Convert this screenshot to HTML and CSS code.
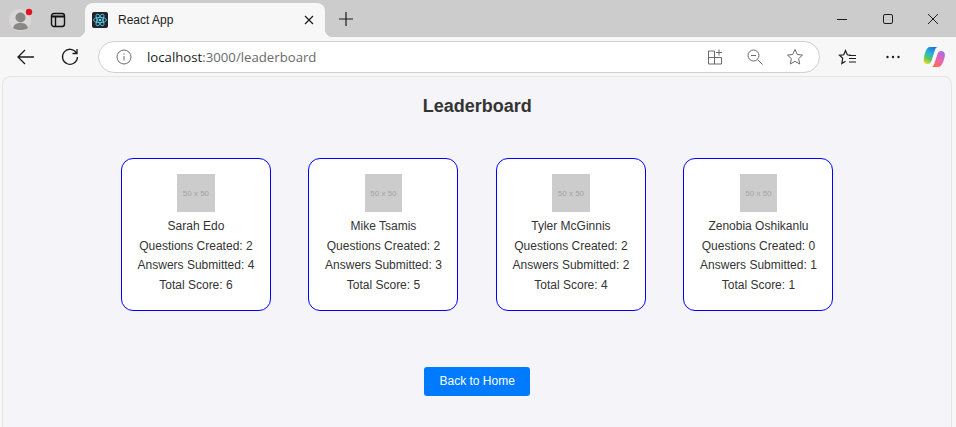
FILE: index.html
```html
<!DOCTYPE html>
<html lang="en">
<head>
  <meta charset="UTF-8" />
  <title>React App</title>
  <link rel="stylesheet" href="styles.css">
</head>
<body>
  <div class="tabbar">
    <div class="profile">
      <svg width="24" height="24" viewBox="0 0 24 24">
        <circle cx="11" cy="12" r="11" fill="#d9d8d6"/>
        <circle cx="11.500" cy="9.500" r="5" fill="#8a8886"/>
        <path d="M4 20c1-4 4-5 7.500-5s6.500 1 7.500 5c-2 1.500-4.500 2-7.500 2s-5.500-.5-7.500-2z" fill="#8a8886"/>
        <circle cx="20" cy="4" r="3.200" fill="#e81123"/>
      </svg>
    </div>
    <div class="tabs-btn">
      <svg width="16" height="16" viewBox="0 0 16 16" fill="none" stroke="#111" stroke-width="1.400">
        <rect x="1.500" y="1.500" width="13" height="13" rx="2.500"/>
        <path d="M1.500 4.500h13" stroke-width="2"/>
        <path d="M5.500 4.500v10"/>
      </svg>
    </div>
    <div class="tab">
      <svg class="favicon" width="16" height="16" viewBox="0 0 16 16" fill="none" stroke="#61dafb" stroke-width="0.800">
        <rect width="16" height="16" rx="2" fill="#20232a" stroke="none"/>
        <ellipse cx="8" cy="8" rx="6.500" ry="2.600"/>
        <ellipse cx="8" cy="8" rx="6.500" ry="2.600" transform="rotate(60 8 8)"/>
        <ellipse cx="8" cy="8" rx="6.500" ry="2.600" transform="rotate(120 8 8)"/>
        <circle cx="8" cy="8" r="1.300" fill="#61dafb" stroke="none"/>
      </svg>
      <span class="tab-title">React App</span>
      <svg width="10" height="10" viewBox="0 0 10 10" stroke="#1c1c1c" stroke-width="1.200">
        <path d="M1 1l8 8M9 1l-8 8"/>
      </svg>
    </div>
    <div class="new-tab">
      <svg width="16" height="16" viewBox="0 0 16 16" stroke="#1c1c1c" stroke-width="1.200">
        <path d="M8 1v14M1 8h14"/>
      </svg>
    </div>
    <div class="window-btns">
      <svg width="12" height="12" viewBox="0 0 12 12" stroke="#1c1c1c" stroke-width="1">
        <path d="M1 6.500h10"/>
      </svg>
      <svg width="12" height="12" viewBox="0 0 12 12" fill="none" stroke="#1c1c1c" stroke-width="1">
        <rect x="1.500" y="1.500" width="9" height="9" rx="1.500"/>
      </svg>
      <svg width="12" height="12" viewBox="0 0 12 12" stroke="#1c1c1c" stroke-width="1">
        <path d="M1 1l10 10M11 1l-10 10"/>
      </svg>
    </div>
  </div>

  <div class="toolbar">
    <svg class="nav-icon" width="20" height="20" viewBox="0 0 20 20" fill="none" stroke="#1c1c1c" stroke-width="1.300">
      <path d="M18 10H2M9 3l-7 7 7 7"/>
    </svg>
    <svg class="nav-icon" width="20" height="20" viewBox="0 0 20 20" fill="none" stroke="#1c1c1c" stroke-width="1.300">
      <path d="M16.500 6A7.500 7.500 0 1 0 17.500 10M17 2v4.500h-4.500"/>
    </svg>
    <div class="address">
      <svg width="16" height="16" viewBox="0 0 16 16" fill="none" stroke="#6a6a6a" stroke-width="1">
        <circle cx="8" cy="8" r="7"/>
        <path d="M8 7v4.500M8 4.500v1.200"/>
      </svg>
      <div class="url"><span class="host">localhost</span>:3000/leaderboard</div>
      <div class="address-icons">
        <svg width="18" height="18" viewBox="0 0 18 18" fill="none" stroke="#6a6a6a" stroke-width="1">
          <path d="M8.500 3H2.500v13h13V9.500H2.500M8.500 3v13"/>
          <path d="M13 1.500v6M10 4.500h6"/>
        </svg>
        <svg width="18" height="18" viewBox="0 0 18 18" fill="none" stroke="#6a6a6a" stroke-width="1">
          <circle cx="7.500" cy="7.500" r="5.500"/>
          <path d="M5 7.500h5M11.500 11.500l5 5"/>
        </svg>
        <svg width="18" height="18" viewBox="0 0 18 18" fill="none" stroke="#6a6a6a" stroke-width="1">
          <path d="M9 1.500l2.300 5 5.200.6-3.900 3.600 1.100 5.300L9 13.300 4.300 16l1.100-5.300L1.500 7.100l5.200-.6z"/>
        </svg>
      </div>
    </div>
    <div class="toolbar-right">
      <svg class="favorites" width="18" height="18" viewBox="0 0 18 18" fill="none" stroke="#1c1c1c" stroke-width="1.200">
        <path d="M13 7.300L9.300 6.800 7.500 2.500 5.700 6.800l-4.200.5 3.200 3-.9 5.200 3.700-2.300"/>
        <path d="M11 7.500h7M11 10.500h7M11 14h7"/>
      </svg>
      <svg width="18" height="18" viewBox="0 0 18 18" fill="#1c1c1c">
        <circle cx="3.500" cy="9" r="1.200"/>
        <circle cx="9" cy="9" r="1.200"/>
        <circle cx="14.500" cy="9" r="1.200"/>
      </svg>
      <svg width="22" height="22" viewBox="0 0 22 22">
        <defs>
          <linearGradient id="copilotA" x1="0.700" y1="0" x2="0.200" y2="1">
            <stop offset="0" stop-color="#1d6fe0"/>
            <stop offset="0.400" stop-color="#27b5d8"/>
            <stop offset="0.700" stop-color="#52c95c"/>
            <stop offset="1" stop-color="#f2d531"/>
          </linearGradient>
          <linearGradient id="copilotB" x1="0.800" y1="0" x2="0.200" y2="1">
            <stop offset="0" stop-color="#a56be8"/>
            <stop offset="0.550" stop-color="#f064a6"/>
            <stop offset="1" stop-color="#f5703a"/>
          </linearGradient>
        </defs>
        <path d="M7 1h8c-1.500 0-2.500 1-3 2.500L8.500 15c-.6 2-2 3-4 3-2.700 0-4.200-2-3.700-5C1.500 8 3 1 7 1z" fill="url(#copilotA)"/>
        <path d="M15 21H8c1.500 0 2.500-1 3-2.500L14.500 8c.6-2 2-3 3.500-3 2.700 0 4.300 2 3.800 5C21 14.500 19 21 15 21z" fill="url(#copilotB)"/>
      </svg>
    </div>
  </div>

  <div class="page">
    <h1>Leaderboard</h1>
    <div class="cards">
      <div class="card">
        <div class="avatar">50 x 50</div>
        <p>Sarah Edo</p>
        <p>Questions Created: 2</p>
        <p>Answers Submitted: 4</p>
        <p>Total Score: 6</p>
      </div>
      <div class="card">
        <div class="avatar">50 x 50</div>
        <p>Mike Tsamis</p>
        <p>Questions Created: 2</p>
        <p>Answers Submitted: 3</p>
        <p>Total Score: 5</p>
      </div>
      <div class="card">
        <div class="avatar">50 x 50</div>
        <p>Tyler McGinnis</p>
        <p>Questions Created: 2</p>
        <p>Answers Submitted: 2</p>
        <p>Total Score: 4</p>
      </div>
      <div class="card">
        <div class="avatar">50 x 50</div>
        <p>Zenobia Oshikanlu</p>
        <p>Questions Created: 0</p>
        <p>Answers Submitted: 1</p>
        <p>Total Score: 1</p>
      </div>
    </div>
    <button class="home-btn" type="button">Back to Home</button>
  </div>
</body>
</html>
```

FILE: styles.css
```css
html, body {
  height: 100%;
}
body {
  margin: 0;
  background-color: #f7f7f7;
  font-family: "Liberation Sans", Arial, sans-serif;
  color: #333;
  display: flex;
  flex-direction: column;
  overflow: hidden;
}
.tabbar {
  height: 37px;
  background-color: #cccccc;
  display: flex;
  align-items: center;
  flex-shrink: 0;
}
.profile {
  margin-left: 9px;
  margin-top: 3px;
  width: 24px;
  height: 24px;
}
.tabs-btn {
  margin-left: 17px;
  margin-top: 3px;
  width: 16px;
  height: 16px;
}
.tab {
  position: relative;
  margin-left: 19px;
  margin-top: 3px;
  height: 34px;
  width: 240px;
  box-sizing: border-box;
  padding: 0 11px 0 7px;
  background-color: #f7f7f7;
  border-radius: 8px 8px 0 0;
  display: flex;
  align-items: center;
  font-size: 12px;
  color: #1c1c1c;
}
.tab::before,
.tab::after {
  content: "";
  position: absolute;
  bottom: 0;
  width: 8px;
  height: 8px;
}
.tab::before {
  left: -8px;
  background: radial-gradient(circle at 0 0, #cccccc 8px, #f7f7f7 8.500px);
}
.tab::after {
  right: -8px;
  background: radial-gradient(circle at 100% 0, #cccccc 8px, #f7f7f7 8.500px);
}
.tab-title {
  flex: 1;
  margin-left: 10px;
}
.new-tab {
  margin-left: 13px;
  width: 16px;
  height: 16px;
}
.window-btns {
  margin-left: auto;
  margin-right: 17px;
  display: flex;
  gap: 33.500px;
}
.toolbar {
  height: 38px;
  padding-top: 1px;
  display: flex;
  align-items: center;
  flex-shrink: 0;
}
.nav-icon {
  margin-left: 16px;
  margin-right: 8px;
}
.address {
  margin-left: 10px;
  width: 722px;
  height: 32px;
  box-sizing: border-box;
  padding: 0 15px 0 17px;
  background-color: #fff;
  border: 1px solid #d0d0d0;
  border-radius: 16px;
  display: flex;
  align-items: center;
}
.url {
  margin-left: 15px;
  font-family: "Open Sans", sans-serif;
  font-size: 13.200px;
  color: #6a6a6a;
}
.host {
  color: #1c1c1c;
}
.address-icons {
  margin-left: auto;
  display: flex;
  gap: 22px;
}
.toolbar-right {
  margin-left: 18px;
  display: flex;
  align-items: center;
  gap: 21px;
}
.favorites {
  margin-right: 7px;
}
.page {
  flex: 1;
  margin: 0 3.600px 0 2px;
  background-color: #f4f4f9;
  border: 1px solid #e6e6e6;
  border-bottom: none;
  border-radius: 8px 8px 0 0;
  display: flex;
  flex-direction: column;
  align-items: center;
}
h1 {
  margin: 18px 0 0;
  font-size: 18px;
  line-height: 22px;
  color: #333;
}
.cards {
  margin-top: 41px;
  display: flex;
  gap: 37.500px;
}
.card {
  width: 150px;
  height: 153px;
  box-sizing: border-box;
  padding-top: 15px;
  background-color: #fff;
  border: 1px solid blue;
  border-radius: 12px;
  display: flex;
  flex-direction: column;
  align-items: center;
}
.card p {
  margin: 0;
  font-size: 12px;
  line-height: 19.500px;
}
.avatar {
  width: 37.600px;
  height: 38px;
  margin-bottom: 5px;
  background-color: #cccccc;
  color: #a3a3a3;
  font-size: 8px;
  display: flex;
  align-items: center;
  justify-content: center;
}
.home-btn {
  margin-top: 56px;
  width: 106px;
  height: 29px;
  padding: 0 0 2px;
  background-color: #007bff;
  color: #fff;
  border: none;
  border-radius: 3px;
  font-family: "Liberation Sans", Arial, sans-serif;
  font-size: 12px;
  cursor: pointer;
}
```
